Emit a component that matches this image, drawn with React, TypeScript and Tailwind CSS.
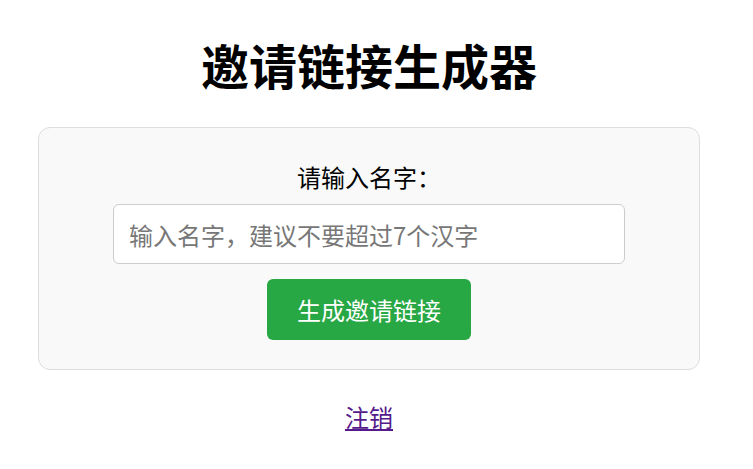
import { useState } from 'react';

const font = { fontFamily: '"Noto Sans CJK SC", "Noto Sans", sans-serif' };

export default function App() {
  const [name, setName] = useState('');

  return (
    <div className="min-h-[469px] w-[738px] bg-white text-black" style={font}>
      <h1 className="pt-[30px] pb-[3px] text-center text-[48px] font-bold leading-[68px]">邀请链接生成器</h1>

      <div className="mx-auto mt-[26px] w-[662px] rounded-xl border border-[#ddd] bg-[#f9f9f9] px-[30px] pt-[30px] pb-[29px]">
        <div className="flex flex-col items-center">
          <label htmlFor="name" className="text-[24px] leading-[38px]">
            请输入名字：
          </label>
          <input
            id="name"
            value={name}
            onChange={(e) => setName(e.target.value)}
            placeholder="输入名字，建议不要超过7个汉字"
            className="mt-[8px] h-[60px] w-[512px] rounded-md border border-[#ccc] bg-white px-[15px] text-[24px] placeholder-[#777] outline-none"
          />
          <button className="mt-[15px] h-[61px] w-[204px] rounded-md bg-[#28a745] text-[24px] text-white">
            生成邀请链接
          </button>
        </div>
      </div>

      <div className="mt-[32px] text-center">
        <a href="#" className="text-[24px] leading-[30px] text-[#551a8b] underline">
          注销
        </a>
      </div>
    </div>
  );
}
